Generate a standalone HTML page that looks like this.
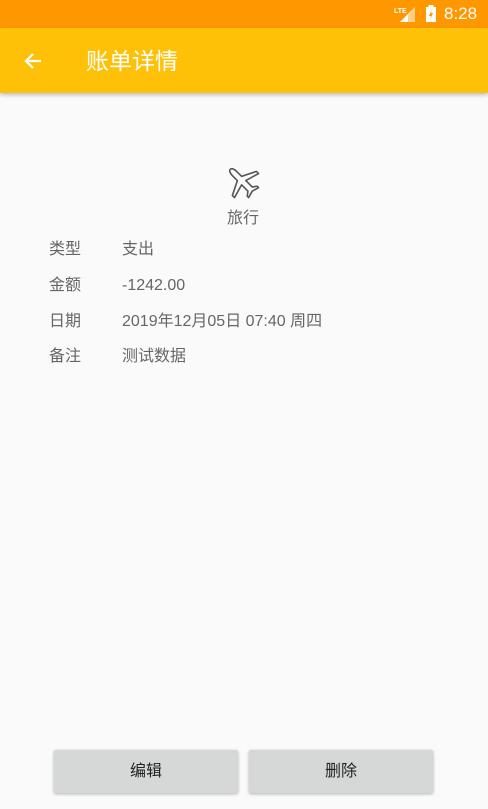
<!DOCTYPE html>
<html><head><meta charset="utf-8"><style>
body{margin:0;width:488px;height:809px;background:#fafafa;font-family:"Liberation Sans","Noto Sans CJK SC",sans-serif;position:relative;overflow:hidden}
.sb{position:absolute;top:0;left:0;width:488px;height:28px;background:#ff9800}
.tb{position:absolute;top:28px;left:0;width:488px;height:65px;background:#ffc107;box-shadow:0 2px 4px rgba(0,0,0,.25)}
.t{position:absolute;left:86px;top:46px;font-size:23px;line-height:30px;color:#fff}
.row{position:absolute;left:49px;font-size:16px;line-height:20px;color:#666}
.row span{position:absolute;left:73px;top:0;white-space:nowrap}
.btn{position:absolute;top:750px;width:184px;height:43px;background:#d6d7d7;border-radius:2px;box-shadow:0 1px 3px rgba(0,0,0,.3);font-size:16px;color:#222;text-align:center;line-height:43px}
</style></head><body>
<div class="sb"></div>
<svg style="position:absolute;left:394px;top:5px" width="24" height="18"><text x="0" y="8" font-size="7" fill="#fff" font-family="Liberation Sans" font-weight="bold">LTE</text><polygon points="6,17 21,17 21,2" fill="#fff"/><polygon points="14,10 21,2 21,17 14,17" fill="#ffd08a"/></svg>
<svg style="position:absolute;left:425px;top:5px" width="12" height="18"><rect x="1" y="2" width="10" height="15" fill="#fff"/><rect x="3.5" y="0" width="5" height="2" fill="#fff"/><polygon points="7,4 4,11 6,11 5,15 8,8 6,8" fill="#ff9800"/></svg>
<div style="position:absolute;left:444px;top:4px;color:#fff;font-size:17px;line-height:20px">8:28</div>
<div class="tb"></div>
<svg style="position:absolute;left:22px;top:50px" width="22" height="22"><path d="M19 11H4M11 4L4 11L11 18" stroke="#fff" stroke-width="2.2" fill="none"/></svg>
<div class="t">账单详情</div>
<svg style="position:absolute;left:222px;top:162px" width="42" height="40" viewBox="0 0 42 40"><g transform="rotate(-45 21 20)" fill="none" stroke="#555" stroke-width="1.6" stroke-linejoin="round"><path d="M21 2c2 0 3 3 3 6v7l14 7v3l-14-4v9l4 3v2l-7-2-7 2v-2l4-3v-9L4 25v-3l14-7V8c0-3 1-6 3-6z"/></g></svg>
<div style="position:absolute;left:227px;top:209px;font-size:16px;line-height:20px;color:#666">旅行</div>
<div class="row" style="top:240px">类型<span>支出</span></div>
<div class="row" style="top:276px">金额<span>-1242.00</span></div>
<div class="row" style="top:312px">日期<span>2019年12月05日 07:40 周四</span></div>
<div class="row" style="top:347px">备注<span>测试数据</span></div>
<div class="btn" style="left:54px">编辑</div>
<div class="btn" style="left:249px">删除</div>
</body></html>
